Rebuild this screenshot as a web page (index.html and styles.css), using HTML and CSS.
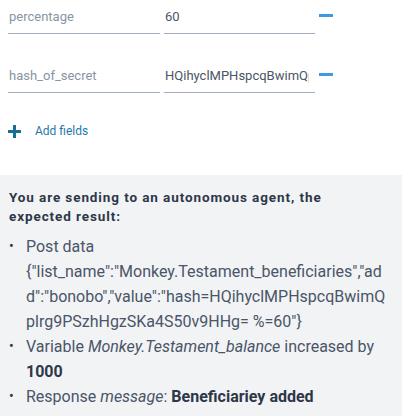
FILE: index.html
```html
<!DOCTYPE html>
<html lang="en">
<head>
    <meta charset="UTF-8">
    <meta name="viewport" content="width=device-width, initial-scale=1.0">
    <title>Send to agent</title>
    <link rel="stylesheet" href="styles.css">
</head>
<body>
    <div class="fields">
        <div class="field-row">
            <input type="text" class="field-input" placeholder="percentage">
            <input type="text" class="field-input value" value="60">
            <button class="remove-btn" aria-label="Remove field"><span class="minus"></span></button>
        </div>
        <div class="field-row">
            <input type="text" class="field-input" placeholder="hash_of_secret">
            <input type="text" class="field-input value" value="HQihyclMPHspcqBwimQplrg9PSzhHgzSKa4S50v9HHg=">
            <button class="remove-btn" aria-label="Remove field"><span class="minus"></span></button>
        </div>
        <button class="add-btn">
            <svg width="13" height="13" viewBox="0 0 13 13"><path d="M5 0h3v5h5v3H8v5H5V8H0V5h5z" fill="#176f95"/></svg>
            <span>Add fields</span>
        </button>
    </div>

    <div class="result">
        <p class="result-title">You are sending to an autonomous agent, the expected result:</p>
        <ul class="result-list">
            <li><span class="dot">&bull;</span><div>Post data {"list_name":"Monkey.Testament_beneficiaries","add":"bonobo","value":"hash=HQihyclMPHspcqBwimQplrg9PSzhHgzSKa4S50v9HHg= %=60"}</div></li>
            <li><span class="dot">&bull;</span><div>Variable <em>Monkey.Testament_balance</em> increased by <strong>1000</strong></div></li>
            <li><span class="dot">&bull;</span><div>Response <em>message</em>: <strong>Beneficiariey added</strong></div></li>
        </ul>
    </div>
</body>
</html>
```

FILE: styles.css
```css
body {
    font-family: Roboto, 'Liberation Sans', sans-serif;
    background-color: #fff;
    margin: 0;
    padding: 0;
}
.fields {
    padding: 0 8px;
    height: 175px;
}
.field-row {
    display: flex;
    align-items: center;
    gap: 4px;
    margin-bottom: 25px;
}
.field-input {
    width: 152px;
    height: 34px;
    box-sizing: border-box;
    padding: 0 1px;
    font-family: inherit;
    font-size: 13px;
    color: #4a5568;
    border: none;
    border-bottom: 1px solid #a0aec0;
    background: transparent;
    outline: none;
}
.field-input::placeholder {
    color: #8795a3;
}
.field-input.value {
    width: 151px;
    padding-right: 6px;
}
.remove-btn {
    border: none;
    background: none;
    padding: 0;
    height: 34px;
    width: 14px;
    display: flex;
    align-items: flex-start;
    padding-top: 14px;
    box-sizing: border-box;
    cursor: pointer;
}
.minus {
    display: block;
    width: 14px;
    height: 3px;
    background: #3b9be2;
}
.add-btn {
    display: flex;
    align-items: center;
    gap: 14px;
    border: none;
    background: none;
    padding: 0;
    margin-top: 31px;
    font-family: inherit;
    font-size: 12px;
    color: #1f7ba6;
    cursor: pointer;
}
.result {
    background: #f2f3f5;
    padding: 13px 12px 10px 9px;
    color: #4a5568;
}
.result-title {
    max-width: 340px;
    margin: 0 0 8px;
    font-size: 13.5px;
    font-weight: bold;
    letter-spacing: 0.9px;
    line-height: 19px;
    color: #2d3748;
}
.result-list {
    list-style: none;
    margin: 0;
    padding: 0;
    font-size: 16px;
    line-height: 25px;
}
.result-list li {
    display: flex;
}
.dot {
    width: 17px;
    flex-shrink: 0;
    font-size: 14px;
    color: #2d3748;
}
.result-list div {
    min-width: 0;
    overflow-wrap: anywhere;
}
.result-list strong {
    color: #2d3748;
}
```
